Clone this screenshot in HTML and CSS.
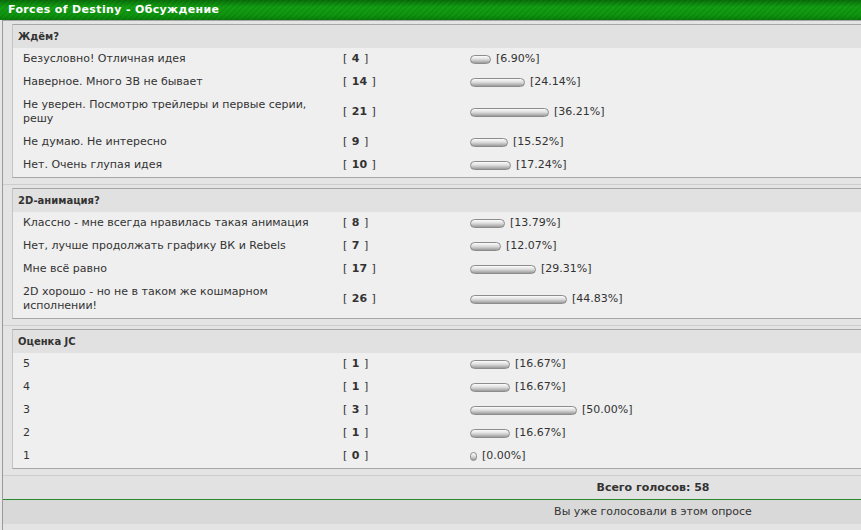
FILE: index.html
```html
<!DOCTYPE html>
<html lang="ru">
<head>
    <meta charset="UTF-8">
    <meta name="viewport" content="width=device-width, initial-scale=1.0">
    <title>Forces of Destiny - Обсуждение</title>
    <link rel="stylesheet" href="styles.css">
</head>
<body>

    <div class="topbar">Forces of Destiny - Обсуждение</div>

    <div class="board">

        <div class="poll-wrap">
            <div class="poll">
                <div class="poll-title">Ждём?</div>
                <div class="poll-row">
                    <div class="answer">Безусловно! Отличная идея</div>
                    <div class="votes">[ <b>4</b> ]</div>
                    <div class="result"><span class="bar" style="width: 21px"></span>[6.90%]</div>
                </div>
                <div class="poll-row">
                    <div class="answer">Наверное. Много ЗВ не бывает</div>
                    <div class="votes">[ <b>14</b> ]</div>
                    <div class="result"><span class="bar" style="width: 55px"></span>[24.14%]</div>
                </div>
                <div class="poll-row">
                    <div class="answer">Не уверен. Посмотрю трейлеры и первые серии, решу</div>
                    <div class="votes">[ <b>21</b> ]</div>
                    <div class="result"><span class="bar" style="width: 79px"></span>[36.21%]</div>
                </div>
                <div class="poll-row">
                    <div class="answer">Не думаю. Не интересно</div>
                    <div class="votes">[ <b>9</b> ]</div>
                    <div class="result"><span class="bar" style="width: 38px"></span>[15.52%]</div>
                </div>
                <div class="poll-row">
                    <div class="answer">Нет. Очень глупая идея</div>
                    <div class="votes">[ <b>10</b> ]</div>
                    <div class="result"><span class="bar" style="width: 41px"></span>[17.24%]</div>
                </div>
            </div>
        </div>

        <div class="poll-wrap">
            <div class="poll">
                <div class="poll-title">2D-анимация?</div>
                <div class="poll-row">
                    <div class="answer">Классно - мне всегда нравилась такая анимация</div>
                    <div class="votes">[ <b>8</b> ]</div>
                    <div class="result"><span class="bar" style="width: 35px"></span>[13.79%]</div>
                </div>
                <div class="poll-row">
                    <div class="answer">Нет, лучше продолжать графику ВК и Rebels</div>
                    <div class="votes">[ <b>7</b> ]</div>
                    <div class="result"><span class="bar" style="width: 31px"></span>[12.07%]</div>
                </div>
                <div class="poll-row">
                    <div class="answer">Мне всё равно</div>
                    <div class="votes">[ <b>17</b> ]</div>
                    <div class="result"><span class="bar" style="width: 66px"></span>[29.31%]</div>
                </div>
                <div class="poll-row">
                    <div class="answer">2D хорошо - но не в таком же кошмарном исполнении!</div>
                    <div class="votes">[ <b>26</b> ]</div>
                    <div class="result"><span class="bar" style="width: 97px"></span>[44.83%]</div>
                </div>
            </div>
        </div>

        <div class="poll-wrap">
            <div class="poll">
                <div class="poll-title">Оценка JC</div>
                <div class="poll-row">
                    <div class="answer">5</div>
                    <div class="votes">[ <b>1</b> ]</div>
                    <div class="result"><span class="bar" style="width: 40px"></span>[16.67%]</div>
                </div>
                <div class="poll-row">
                    <div class="answer">4</div>
                    <div class="votes">[ <b>1</b> ]</div>
                    <div class="result"><span class="bar" style="width: 40px"></span>[16.67%]</div>
                </div>
                <div class="poll-row">
                    <div class="answer">3</div>
                    <div class="votes">[ <b>3</b> ]</div>
                    <div class="result"><span class="bar" style="width: 107px"></span>[50.00%]</div>
                </div>
                <div class="poll-row">
                    <div class="answer">2</div>
                    <div class="votes">[ <b>1</b> ]</div>
                    <div class="result"><span class="bar" style="width: 40px"></span>[16.67%]</div>
                </div>
                <div class="poll-row">
                    <div class="answer">1</div>
                    <div class="votes">[ <b>0</b> ]</div>
                    <div class="result"><span class="bar" style="width: 7px"></span>[0.00%]</div>
                </div>
            </div>
        </div>

        <div class="total">Всего голосов: 58</div>
        <div class="voted">Вы уже голосовали в этом опросе</div>

    </div>

</body>
</html>
```

FILE: styles.css
```css
html, body {
    margin: 0;
    overflow: hidden;
}

body {
    font-family: 'DejaVu Sans', Verdana, sans-serif;
    font-size: 11px;
    color: #333;
    background-color: #e6e6e6;
    width: 1310px;
}

.topbar {
    height: 20px;
    line-height: 19px;
    padding-left: 8px;
    color: #fff;
    font-weight: bold;
    letter-spacing: 0.35px;
    background-color: #0d8f0d;
    background-image:
        repeating-linear-gradient(135deg, rgba(0, 0, 0, 0.07) 0 2px, transparent 2px 4px),
        linear-gradient(#0a6f0a, #13a013 35%, #0f960f 75%, #0a7d0a);
}

.board {
    width: 1300px;
    margin-left: 2px;
    border-left: 1px solid #9a9a9a;
    border-top: 1px solid #a4a4a4;
    background-color: #e4e4e4;
}

.poll-wrap {
    padding: 3px 0 6px 9px;
}

.poll-wrap + .poll-wrap {
    border-top: 1px solid #cdcdcd;
}

.poll {
    border: 1px solid #a6a6a6;
    border-left-color: #c4c4c4;
    background-color: #efefef;
}

.poll-title {
    height: 23px;
    line-height: 23px;
    padding-left: 5px;
    font-size: 10px;
    font-weight: bold;
    background-color: #e1e1e1;
}

.poll-row {
    display: grid;
    grid-template-columns: 320px 127px 1fr;
    align-items: center;
    padding: 4px 0 5px 10px;
    line-height: 14px;
}

.answer {
    padding-right: 24px;
}

.votes b {
    font-weight: bold;
    padding: 0 1px;
}

.result {
    display: flex;
    align-items: center;
}

.bar {
    display: inline-block;
    box-sizing: border-box;
    height: 9px;
    margin-right: 5px;
    border: 1px solid #8c8c8c;
    border-radius: 5px;
    background: linear-gradient(#fcfcfc, #dedede 45%, #b4b4b4 80%, #9a9a9a);
}

.total {
    height: 23px;
    line-height: 23px;
    text-align: center;
    font-weight: bold;
    border-top: 1px solid #cdcdcd;
    border-bottom: 1px solid #2a8a2a;
    background-color: #e2e2e2;
}

.voted {
    height: 24px;
    line-height: 24px;
    text-align: center;
    background-color: #d9d9d9;
    border-bottom: 6px solid #e4e4e4;
}
```
